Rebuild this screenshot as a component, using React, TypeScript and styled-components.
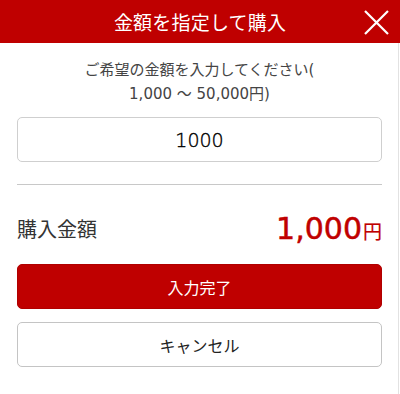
import styled, { createGlobalStyle } from "styled-components";

const GlobalStyle = createGlobalStyle`
  html, body {
    margin: 0;
    padding: 0;
    background: #fff;
  }
  body {
    font-family: "DejaVu Sans", "Noto Sans CJK JP", sans-serif;
    color: #333;
  }
`;

const Modal = styled.div`
  width: 400px;
  height: 394px;
  box-sizing: border-box;
  background: #fff;
`;

const Header = styled.header`
  position: relative;
  height: 43px;
  background: #bf0000;
  display: flex;
  align-items: center;
  justify-content: center;
`;

const Title = styled.h1`
  margin: 0;
  font-size: 19px;
  font-weight: 400;
  color: #fff;
  letter-spacing: 0.2px;
`;

const CloseButton = styled.button`
  position: absolute;
  right: 11px;
  top: 10px;
  width: 25px;
  height: 25px;
  padding: 0;
  border: none;
  background: transparent;
  cursor: pointer;
  display: flex;
`;

const Body = styled.div`
  padding: 15px 16px 0 17px;
  margin-right: 1px;
  border-right: 1px solid #e2e2e2;
  height: 336px;
`;

const Note = styled.p`
  margin: 0;
  font-size: 15px;
  line-height: 24px;
  text-align: center;
  color: #444;
`;

const AmountInput = styled.input`
  display: block;
  box-sizing: border-box;
  width: 100%;
  height: 45px;
  margin-top: 11px;
  border: 1px solid #cfcfcf;
  border-radius: 5px;
  font-family: "DejaVu Sans ExtraLight", "DejaVu Sans", sans-serif;
  font-size: 19px;
  font-weight: 200;
  color: #000;
  -webkit-text-stroke: 0.4px #000;
  text-align: center;
  outline: none;
`;

const Divider = styled.hr`
  margin: 22px 0 0;
  border: none;
  border-top: 1px solid #c8c8c8;
`;

const TotalRow = styled.div`
  height: 56px;
  margin-top: 15px;
  display: flex;
  align-items: center;
  justify-content: space-between;
`;

const TotalLabel = styled.span`
  font-size: 20px;
  color: #333;
`;

const TotalValue = styled.span`
  color: #c00000;
  font-weight: 400;
  font-size: 30px;
  -webkit-text-stroke: 0.5px #c00000;
  display: flex;
  align-items: baseline;
`;

const Yen = styled.span`
  font-size: 19px;
  margin-left: 1px;
  -webkit-text-stroke: 0.2px #c00000;
`;

const Button = styled.button<{ $primary?: boolean }>`
  display: block;
  width: 100%;
  height: 45px;
  box-sizing: border-box;
  border-radius: 5px;
  font-family: inherit;
  font-size: 16px;
  cursor: pointer;
  border: 1px solid ${(p) => (p.$primary ? "#b00000" : "#c4c4c4")};
  background: ${(p) => (p.$primary ? "#bf0000" : "#fff")};
  color: ${(p) => (p.$primary ? "#fff" : "#222")};
  margin-top: ${(p) => (p.$primary ? "8px" : "13px")};
`;

export default function App() {
  return (
    <>
      <GlobalStyle />
      <Modal>
        <Header>
          <Title>金額を指定して購入</Title>
          <CloseButton aria-label="閉じる">
            <svg width="25" height="25" viewBox="0 0 25 25">
              <path
                d="M1 1 L24 24 M24 1 L1 24"
                stroke="#fff"
                strokeWidth="2.2"
                fill="none"
              />
            </svg>
          </CloseButton>
        </Header>
        <Body>
          <Note>
            ご希望の金額を入力してください(
            <br />
            1,000 〜 50,000円)
          </Note>
          <AmountInput defaultValue="1000" />
          <Divider />
          <TotalRow>
            <TotalLabel>購入金額</TotalLabel>
            <TotalValue>
              1,000<Yen>円</Yen>
            </TotalValue>
          </TotalRow>
          <Button $primary>入力完了</Button>
          <Button>キャンセル</Button>
        </Body>
      </Modal>
    </>
  );
}
